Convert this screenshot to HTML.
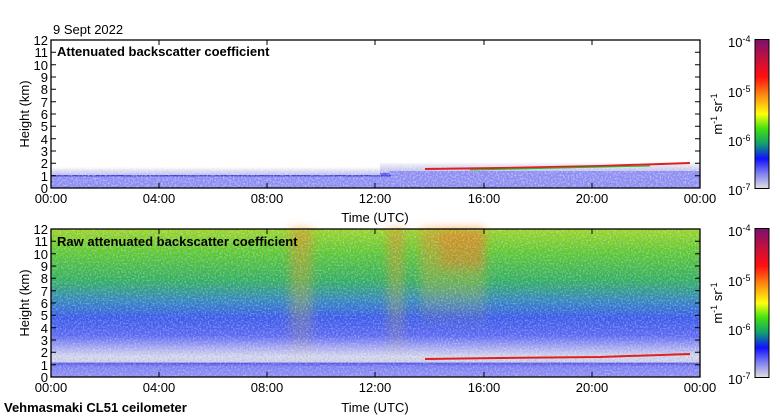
<!DOCTYPE html>
<html><head><meta charset="utf-8"><style>
html,body{margin:0;padding:0;background:#fff}
svg{display:block}
text{font-family:"Liberation Sans",sans-serif;font-size:13px;fill:#000}
.b{font-weight:bold}
</style></head><body>
<svg width="780" height="420" viewBox="0 0 780 420" xmlns="http://www.w3.org/2000/svg">
<defs>
<linearGradient id="cb" x1="0" y1="0" x2="0" y2="1">
<stop offset="0" stop-color="#7a1070"/>
<stop offset="0.12" stop-color="#c01040"/>
<stop offset="0.25" stop-color="#ff1010"/>
<stop offset="0.38" stop-color="#ff9010"/>
<stop offset="0.5" stop-color="#ffff10"/>
<stop offset="0.6" stop-color="#40e010"/>
<stop offset="0.7" stop-color="#10a070"/>
<stop offset="0.8" stop-color="#1010ff"/>
<stop offset="0.9" stop-color="#8080f0"/>
<stop offset="1" stop-color="#e0e0e0"/>
</linearGradient>
<linearGradient id="p2" x1="0" y1="0" x2="0" y2="1">
<stop offset="0" stop-color="#a0d820"/>
<stop offset="0.15" stop-color="#60cc28"/>
<stop offset="0.35" stop-color="#30b058"/>
<stop offset="0.48" stop-color="#3088b8"/>
<stop offset="0.6" stop-color="#3858e8"/>
<stop offset="0.72" stop-color="#5a66f0"/>
<stop offset="0.8" stop-color="#a8a8f0"/>
<stop offset="0.86" stop-color="#d8d8e8"/>
<stop offset="0.9" stop-color="#d0d0e8"/>
<stop offset="0.905" stop-color="#5050e0"/>
<stop offset="0.93" stop-color="#8080f0"/>
<stop offset="1" stop-color="#9090f0"/>
</linearGradient>
<linearGradient id="p1" x1="0" y1="0" x2="0" y2="1">
<stop offset="0" stop-color="#ffffff"/>
<stop offset="0.2" stop-color="#d8d8ee"/>
<stop offset="0.4" stop-color="#b8b8f0"/>
<stop offset="0.45" stop-color="#4a4ae0"/>
<stop offset="0.55" stop-color="#8888f0"/>
<stop offset="1" stop-color="#9a9af0"/>
</linearGradient>
<linearGradient id="or" x1="0" y1="0" x2="0" y2="1">
<stop offset="0" stop-color="#ff7010" stop-opacity="0.5"/>
<stop offset="0.6" stop-color="#e0c020" stop-opacity="0.3"/>
<stop offset="1" stop-color="#e0c020" stop-opacity="0"/>
</linearGradient>
<filter id="bl"><feGaussianBlur stdDeviation="5"/></filter>
<filter id="nz" x="0" y="0" width="100%" height="100%">
<feTurbulence type="fractalNoise" baseFrequency="0.6" numOctaves="1" seed="3"/>
<feColorMatrix type="matrix" values="0 0 0 0 1  0 0 0 0 1  0 0 0 0 1  0 0 0 -3 1.7"/>
</filter>
<filter id="nz2" x="0" y="0" width="100%" height="100%">
<feTurbulence type="fractalNoise" baseFrequency="0.6" numOctaves="1" seed="9"/>
<feColorMatrix type="matrix" values="0 0 0 0 0.1  0 0 0 0 0.2  0 0 0 0 1  0 0 0 -3 1.6"/>
</filter>
</defs>

<text x="53" y="34">9 Sept 2022</text>

<!-- Plot 1 -->
<rect x="51" y="40" width="649" height="148" fill="#fff"/>
<rect x="51" y="167" width="330" height="21" fill="url(#p1)"/>
<rect x="380" y="162" width="320" height="26" fill="url(#p1)"/>
<rect x="51" y="175" width="340" height="13" fill="#8c8cf2"/>
<rect x="390" y="171" width="310" height="17" fill="#8c8cf2"/>
<rect x="51" y="175" width="340" height="1.5" fill="#4444e0"/>
<rect x="51" y="166" width="649" height="22" filter="url(#nz)" opacity="0.45"/>
<path d="M425 169 L500 168 L600 166 L690 163" stroke="#e02020" stroke-width="2" fill="none"/>
<path d="M470 170 L560 168 L650 166" stroke="#20c020" stroke-width="1" fill="none"/>
<rect x="51" y="40" width="649" height="148" fill="none" stroke="#000" stroke-width="1.3"/>
<text x="57" y="56" class="b">Attenuated backscatter coefficient</text>

<!-- Plot 2 -->
<rect x="51" y="229" width="649" height="148" fill="url(#p2)"/>
<g filter="url(#bl)">
<rect x="290" y="229" width="22" height="130" fill="url(#or)"/>
<rect x="388" y="229" width="16" height="130" fill="url(#or)"/>
<rect x="420" y="229" width="65" height="100" fill="url(#or)"/>
<rect x="440" y="229" width="45" height="40" fill="#ff6010" opacity="0.3"/>
</g>
<rect x="51" y="229" width="649" height="148" filter="url(#nz)" opacity="0.35"/>
<rect x="51" y="229" width="649" height="148" filter="url(#nz2)" opacity="0.3"/>
<path d="M425 359 L500 358 L600 357 L690 354" stroke="#e02020" stroke-width="2" fill="none"/>
<rect x="51" y="229" width="649" height="148" fill="none" stroke="#000" stroke-width="1.3"/>
<text x="57" y="246" class="b">Raw attenuated backscatter coefficient</text>

<g stroke="#000" stroke-width="1">
<path d="M51 52.3h5M51 64.7h5M51 77h5M51 89.3h5M51 101.7h5M51 114h5M51 126.3h5M51 138.7h5M51 151h5M51 163.3h5M51 175.7h5
M700 52.3h-5M700 64.7h-5M700 77h-5M700 89.3h-5M700 101.7h-5M700 114h-5M700 126.3h-5M700 138.7h-5M700 151h-5M700 163.3h-5M700 175.7h-5
M159 40v5M267 40v5M375 40v5M484 40v5M592 40v5M159 188v-5M267 188v-5M375 188v-5M484 188v-5M592 188v-5"/>
<path d="M51 241.3h5M51 253.7h5M51 266h5M51 278.3h5M51 290.7h5M51 303h5M51 315.3h5M51 327.7h5M51 340h5M51 352.3h5M51 364.7h5
M700 241.3h-5M700 253.7h-5M700 266h-5M700 278.3h-5M700 290.7h-5M700 303h-5M700 315.3h-5M700 327.7h-5M700 340h-5M700 352.3h-5M700 364.7h-5
M159 229v5M267 229v5M375 229v5M484 229v5M592 229v5M159 377v-5M267 377v-5M375 377v-5M484 377v-5M592 377v-5"/>
</g>

<g text-anchor="end">
<text x="48" y="193">0</text><text x="48" y="181">1</text><text x="48" y="168">2</text><text x="48" y="156">3</text><text x="48" y="144">4</text><text x="48" y="131">5</text><text x="48" y="119">6</text><text x="48" y="107">7</text><text x="48" y="94">8</text><text x="48" y="82">9</text><text x="48" y="70">10</text><text x="48" y="57">11</text><text x="48" y="45">12</text>
<text x="48" y="382">0</text><text x="48" y="370">1</text><text x="48" y="357">2</text><text x="48" y="345">3</text><text x="48" y="333">4</text><text x="48" y="320">5</text><text x="48" y="308">6</text><text x="48" y="296">7</text><text x="48" y="283">8</text><text x="48" y="271">9</text><text x="48" y="259">10</text><text x="48" y="246">11</text><text x="48" y="234">12</text>
</g>
<g text-anchor="middle">
<text x="51" y="203">00:00</text><text x="159" y="203">04:00</text><text x="267" y="203">08:00</text><text x="375" y="203">12:00</text><text x="484" y="203">16:00</text><text x="592" y="203">20:00</text><text x="700" y="203">00:00</text>
<text x="375" y="222">Time (UTC)</text>
<text x="51" y="392">00:00</text><text x="159" y="392">04:00</text><text x="267" y="392">08:00</text><text x="375" y="392">12:00</text><text x="484" y="392">16:00</text><text x="592" y="392">20:00</text><text x="700" y="392">00:00</text>
<text x="375" y="412">Time (UTC)</text>
</g>
<text transform="translate(29,114) rotate(-90)" text-anchor="middle">Height (km)</text>
<text transform="translate(29,303) rotate(-90)" text-anchor="middle">Height (km)</text>
<text x="4" y="412" class="b">Vehmasmaki CL51 ceilometer</text>

<rect x="755" y="39.5" width="14" height="149" fill="url(#cb)" stroke="#000"/>
<rect x="755" y="228.5" width="14" height="149" fill="url(#cb)" stroke="#000"/>
<g>
<text x="728" y="47">10<tspan dy="-5" font-size="9">-4</tspan></text>
<text x="728" y="97">10<tspan dy="-5" font-size="9">-5</tspan></text>
<text x="728" y="146">10<tspan dy="-5" font-size="9">-6</tspan></text>
<text x="728" y="195">10<tspan dy="-5" font-size="9">-7</tspan></text>
<text x="728" y="236">10<tspan dy="-5" font-size="9">-4</tspan></text>
<text x="728" y="286">10<tspan dy="-5" font-size="9">-5</tspan></text>
<text x="728" y="335">10<tspan dy="-5" font-size="9">-6</tspan></text>
<text x="728" y="384">10<tspan dy="-5" font-size="9">-7</tspan></text>
</g>
<text transform="translate(722,114) rotate(-90)" text-anchor="middle">m<tspan dy="-5" font-size="9">-1</tspan><tspan dy="5"> sr</tspan><tspan dy="-5" font-size="9">-1</tspan></text>
<text transform="translate(722,303) rotate(-90)" text-anchor="middle">m<tspan dy="-5" font-size="9">-1</tspan><tspan dy="5"> sr</tspan><tspan dy="-5" font-size="9">-1</tspan></text>
</svg>
</body></html>
